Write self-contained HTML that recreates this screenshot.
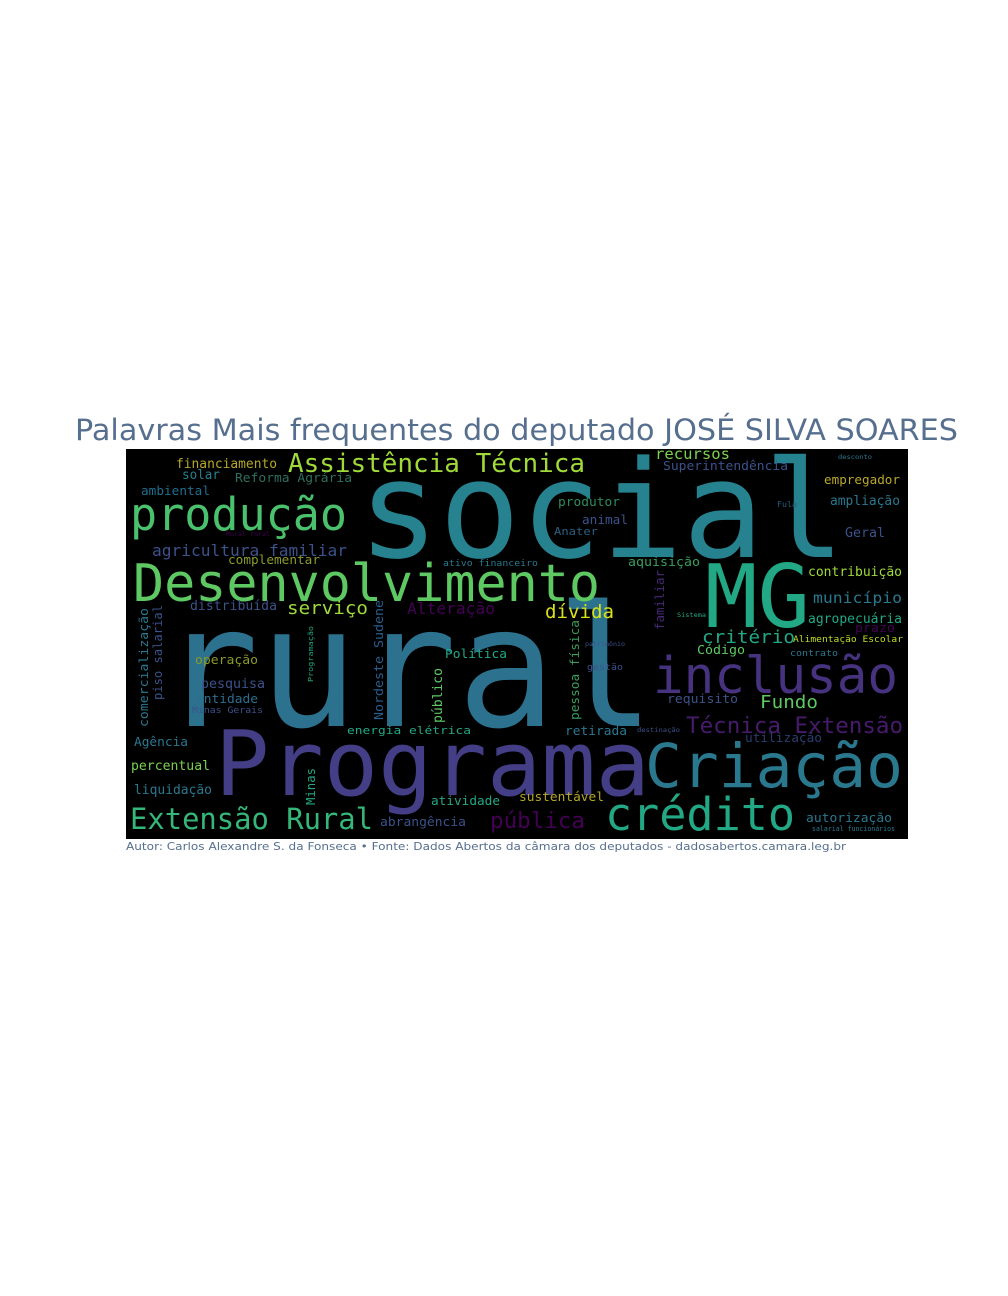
<!DOCTYPE html>
<html><head><meta charset="utf-8"><style>
html,body{margin:0;padding:0;background:#fff;}
svg{display:block}
.w{font-family:"DejaVu Sans Mono","Liberation Mono",monospace}
</style></head><body>
<svg width="1008" height="1296" viewBox="0 0 1008 1296" xmlns="http://www.w3.org/2000/svg">
<text x="75" y="440" font-family="DejaVu Sans, Liberation Sans, sans-serif" font-size="29" fill="#566f8f" textLength="883" lengthAdjust="spacingAndGlyphs">Palavras Mais frequentes do deputado JOSÉ SILVA SOARES</text>
<rect x="126" y="449" width="782" height="390" fill="#000"/>
<g class="w" lengthAdjust="spacingAndGlyphs">
<text x="358" y="557" font-size="135" fill="#26828e" textLength="487" lengthAdjust="spacingAndGlyphs">social</text>
<text x="160" y="726" font-size="168" fill="#2c728e" textLength="495" lengthAdjust="spacingAndGlyphs">rural</text>
<text x="215" y="795" font-size="90" fill="#433e85" textLength="435" lengthAdjust="spacingAndGlyphs">Programa</text>
<text x="133" y="601" font-size="52" fill="#5ec962" textLength="467" lengthAdjust="spacingAndGlyphs">Desenvolvimento</text>
<text x="130" y="530" font-size="45" fill="#4ac16d" textLength="217" lengthAdjust="spacingAndGlyphs">produção</text>
<text x="705" y="627" font-size="87" fill="#22a884" textLength="105" lengthAdjust="spacingAndGlyphs">MG</text>
<text x="653" y="693" font-size="51" fill="#46327e" textLength="245" lengthAdjust="spacingAndGlyphs">inclusão</text>
<text x="645" y="787" font-size="61" fill="#2a788e" textLength="258" lengthAdjust="spacingAndGlyphs">Criação</text>
<text x="605" y="830" font-size="45" fill="#22a884" textLength="190" lengthAdjust="spacingAndGlyphs">crédito</text>
<text x="130" y="829" font-size="29" fill="#35b779" textLength="243" lengthAdjust="spacingAndGlyphs">Extensão Rural</text>
<text x="288" y="472" font-size="26" fill="#a0da39" textLength="297" lengthAdjust="spacingAndGlyphs">Assistência Técnica</text>
<text x="686" y="733" font-size="22" fill="#481a6c" textLength="217" lengthAdjust="spacingAndGlyphs">Técnica Extensão</text>
<text x="152" y="556" font-size="16" fill="#3b528b" textLength="195" lengthAdjust="spacingAndGlyphs">agricultura familiar</text>
<text x="490" y="828" font-size="22" fill="#440154" textLength="95" lengthAdjust="spacingAndGlyphs">pública</text>
<text x="545" y="618" font-size="19" fill="#d8e219" textLength="69" lengthAdjust="spacingAndGlyphs">dívida</text>
<text x="287" y="614" font-size="18" fill="#a0da39" textLength="81" lengthAdjust="spacingAndGlyphs">serviço</text>
<text x="407" y="614" font-size="16" fill="#440154" textLength="88" lengthAdjust="spacingAndGlyphs">Alteração</text>
<text x="190" y="610" font-size="13" fill="#3b528b" textLength="87" lengthAdjust="spacingAndGlyphs">distribuída</text>
<text x="176" y="468" font-size="13" fill="#b5a828" textLength="101" lengthAdjust="spacingAndGlyphs">financiamento</text>
<text x="182" y="479" font-size="13" fill="#277f8e" textLength="38" lengthAdjust="spacingAndGlyphs">solar</text>
<text x="235" y="482" font-size="12" fill="#2e6e5e" textLength="117" lengthAdjust="spacingAndGlyphs">Reforma Agrária</text>
<text x="141" y="495" font-size="12" fill="#1f6e8e" textLength="69" lengthAdjust="spacingAndGlyphs">ambiental</text>
<text x="228" y="564" font-size="12" fill="#8b9a2a" textLength="92" lengthAdjust="spacingAndGlyphs">complementar</text>
<text x="226" y="536" font-size="6" fill="#440154" textLength="44" lengthAdjust="spacingAndGlyphs">Rural rural</text>
<text x="655" y="459" font-size="15" fill="#7ad151" textLength="75" lengthAdjust="spacingAndGlyphs">recursos</text>
<text x="663" y="470" font-size="12" fill="#3b528b" textLength="125" lengthAdjust="spacingAndGlyphs">Superintendência</text>
<text x="838" y="459" font-size="6" fill="#2a788e" textLength="34" lengthAdjust="spacingAndGlyphs">desconto</text>
<text x="824" y="484" font-size="12" fill="#b8a82a" textLength="76" lengthAdjust="spacingAndGlyphs">empregador</text>
<text x="558" y="506" font-size="12" fill="#2e8a5e" textLength="62" lengthAdjust="spacingAndGlyphs">produtor</text>
<text x="830" y="505" font-size="13" fill="#2a788e" textLength="70" lengthAdjust="spacingAndGlyphs">ampliação</text>
<text x="777" y="507" font-size="8" fill="#2c5e7e" textLength="20" lengthAdjust="spacingAndGlyphs">Fula</text>
<text x="582" y="524" font-size="12" fill="#3b528b" textLength="46" lengthAdjust="spacingAndGlyphs">animal</text>
<text x="554" y="535" font-size="11" fill="#2c5e7e" textLength="44" lengthAdjust="spacingAndGlyphs">Anater</text>
<text x="845" y="537" font-size="13" fill="#3b528b" textLength="40" lengthAdjust="spacingAndGlyphs">Geral</text>
<text x="628" y="566" font-size="12" fill="#3b9e5e" textLength="72" lengthAdjust="spacingAndGlyphs">aquisição</text>
<text x="443" y="566" font-size="9" fill="#2a788e" textLength="95" lengthAdjust="spacingAndGlyphs">ativo financeiro</text>
<text x="808" y="576" font-size="13" fill="#a0da39" textLength="94" lengthAdjust="spacingAndGlyphs">contribuição</text>
<text x="813" y="603" font-size="15" fill="#2a788e" textLength="89" lengthAdjust="spacingAndGlyphs">município</text>
<text x="808" y="623" font-size="13" fill="#22a884" textLength="94" lengthAdjust="spacingAndGlyphs">agropecuária</text>
<text x="855" y="632" font-size="12" fill="#440154" textLength="40" lengthAdjust="spacingAndGlyphs">prazo</text>
<text x="702" y="643" font-size="18" fill="#22a884" textLength="93" lengthAdjust="spacingAndGlyphs">critério</text>
<text x="793" y="642" font-size="9" fill="#bddf26" textLength="110" lengthAdjust="spacingAndGlyphs">Alimentação Escolar</text>
<text x="697" y="654" font-size="12" fill="#5ec962" textLength="48" lengthAdjust="spacingAndGlyphs">Código</text>
<text x="790" y="656" font-size="9" fill="#2a788e" textLength="48" lengthAdjust="spacingAndGlyphs">contrato</text>
<text x="677" y="617" font-size="6" fill="#22a884" textLength="29" lengthAdjust="spacingAndGlyphs">Sistema</text>
<text x="760" y="708" font-size="18" fill="#5ec962" textLength="58" lengthAdjust="spacingAndGlyphs">Fundo</text>
<text x="667" y="703" font-size="12" fill="#3b528b" textLength="71" lengthAdjust="spacingAndGlyphs">requisito</text>
<text x="745" y="742" font-size="12" fill="#2a3e6e" textLength="77" lengthAdjust="spacingAndGlyphs">utilização</text>
<text x="445" y="658" font-size="12" fill="#22a884" textLength="62" lengthAdjust="spacingAndGlyphs">Política</text>
<text x="587" y="670" font-size="9" fill="#3b528b" textLength="36" lengthAdjust="spacingAndGlyphs">gestão</text>
<text x="585" y="646" font-size="6" fill="#3b528b" textLength="40" lengthAdjust="spacingAndGlyphs">patrimônio</text>
<text x="195" y="664" font-size="12" fill="#8a9a25" textLength="63" lengthAdjust="spacingAndGlyphs">operação</text>
<text x="201" y="688" font-size="13" fill="#3b528b" textLength="64" lengthAdjust="spacingAndGlyphs">pesquisa</text>
<text x="196" y="703" font-size="12" fill="#2a6e8e" textLength="62" lengthAdjust="spacingAndGlyphs">entidade</text>
<text x="192" y="713" font-size="9" fill="#3b528b" textLength="71" lengthAdjust="spacingAndGlyphs">Minas Gerais</text>
<text x="134" y="746" font-size="12" fill="#2a788e" textLength="54" lengthAdjust="spacingAndGlyphs">Agência</text>
<text x="131" y="770" font-size="13" fill="#7ad151" textLength="79" lengthAdjust="spacingAndGlyphs">percentual</text>
<text x="134" y="794" font-size="13" fill="#2a788e" textLength="78" lengthAdjust="spacingAndGlyphs">liquidação</text>
<text x="347" y="734" font-size="11" fill="#22a884" textLength="124" lengthAdjust="spacingAndGlyphs">energia elétrica</text>
<text x="565" y="735" font-size="12" fill="#2a788e" textLength="62" lengthAdjust="spacingAndGlyphs">retirada</text>
<text x="637" y="732" font-size="6" fill="#3b528b" textLength="43" lengthAdjust="spacingAndGlyphs">destinação</text>
<text x="431" y="805" font-size="12" fill="#22a884" textLength="69" lengthAdjust="spacingAndGlyphs">atividade</text>
<text x="519" y="801" font-size="12" fill="#b5a828" textLength="85" lengthAdjust="spacingAndGlyphs">sustentável</text>
<text x="380" y="826" font-size="12" fill="#3b528b" textLength="86" lengthAdjust="spacingAndGlyphs">abrangência</text>
<text x="806" y="822" font-size="12" fill="#2a788e" textLength="86" lengthAdjust="spacingAndGlyphs">autorização</text>
<text x="812" y="831" font-size="7" fill="#2a788e" textLength="83" lengthAdjust="spacingAndGlyphs">salarial funcionários</text>
<text transform="translate(148,727) rotate(-90)" font-size="12" fill="#2a788e" textLength="119" lengthAdjust="spacingAndGlyphs">comercialização</text>
<text transform="translate(162,700) rotate(-90)" font-size="12" fill="#3b528b" textLength="95" lengthAdjust="spacingAndGlyphs">piso salarial</text>
<text transform="translate(313,682) rotate(-90)" font-size="7" fill="#22a884" textLength="56" lengthAdjust="spacingAndGlyphs">Programação</text>
<text transform="translate(383,720) rotate(-90)" font-size="12" fill="#2a5e8e" textLength="120" lengthAdjust="spacingAndGlyphs">Nordeste Sudene</text>
<text transform="translate(442,723) rotate(-90)" font-size="13" fill="#5ec962" textLength="55" lengthAdjust="spacingAndGlyphs">público</text>
<text transform="translate(579,720) rotate(-90)" font-size="12" fill="#3b9e5e" textLength="100" lengthAdjust="spacingAndGlyphs">pessoa física</text>
<text transform="translate(664,630) rotate(-90)" font-size="12" fill="#482878" textLength="60" lengthAdjust="spacingAndGlyphs">familiar</text>
<text transform="translate(315,805) rotate(-90)" font-size="12" fill="#22a884" textLength="37" lengthAdjust="spacingAndGlyphs">Minas</text>
</g>
<text x="126" y="850" font-family="DejaVu Sans, Liberation Sans, sans-serif" font-size="11" fill="#566f8f" textLength="720" lengthAdjust="spacingAndGlyphs">Autor: Carlos Alexandre S. da Fonseca • Fonte: Dados Abertos da câmara dos deputados - dadosabertos.camara.leg.br</text>
</svg>
</body></html>
